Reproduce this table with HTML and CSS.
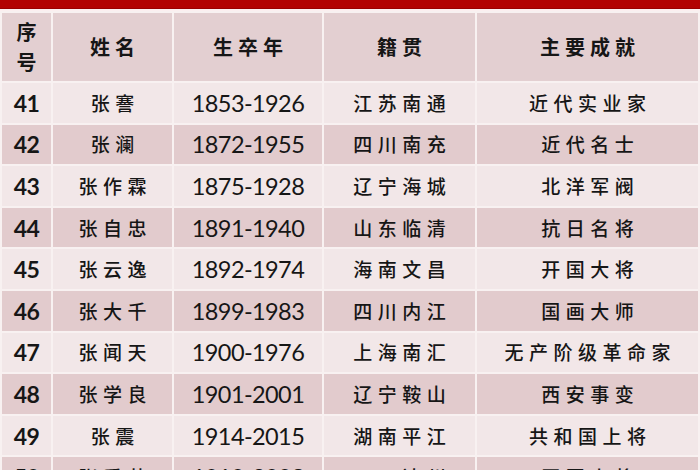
FILE: index.html
```html
<!DOCTYPE html>
<html lang="zh-CN">
<head>
<meta charset="utf-8">
<title>张姓名人</title>
<link rel="stylesheet" href="styles.css">
</head>
<body>
<div class="topbar"></div>
<div class="gapline"></div>
<table class="people">
  <colgroup>
    <col class="c-no"><col class="c-name"><col class="c-life"><col class="c-home"><col class="c-ach">
  </colgroup>
  <thead>
    <tr><th class="no-head">序<br>号</th><th>姓名</th><th>生卒年</th><th>籍贯</th><th>主要成就</th></tr>
  </thead>
  <tbody>
    <tr class="light"><td class="num">41</td><td class="cn">张謇</td><td class="yr">1853-1926</td><td class="cn">江苏南通</td><td class="cn">近代实业家</td></tr>
    <tr class="dark"><td class="num">42</td><td class="cn">张澜</td><td class="yr">1872-1955</td><td class="cn">四川南充</td><td class="cn">近代名士</td></tr>
    <tr class="light"><td class="num">43</td><td class="cn">张作霖</td><td class="yr">1875-1928</td><td class="cn">辽宁海城</td><td class="cn">北洋军阀</td></tr>
    <tr class="dark"><td class="num">44</td><td class="cn">张自忠</td><td class="yr">1891-1940</td><td class="cn">山东临清</td><td class="cn">抗日名将</td></tr>
    <tr class="light"><td class="num">45</td><td class="cn">张云逸</td><td class="yr">1892-1974</td><td class="cn">海南文昌</td><td class="cn">开国大将</td></tr>
    <tr class="dark"><td class="num">46</td><td class="cn">张大千</td><td class="yr">1899-1983</td><td class="cn">四川内江</td><td class="cn">国画大师</td></tr>
    <tr class="light"><td class="num">47</td><td class="cn">张闻天</td><td class="yr">1900-1976</td><td class="cn">上海南汇</td><td class="cn">无产阶级革命家</td></tr>
    <tr class="dark"><td class="num">48</td><td class="cn">张学良</td><td class="yr">1901-2001</td><td class="cn">辽宁鞍山</td><td class="cn">西安事变</td></tr>
    <tr class="light"><td class="num">49</td><td class="cn">张震</td><td class="yr">1914-2015</td><td class="cn">湖南平江</td><td class="cn">共和国上将</td></tr>
    <tr class="dark"><td class="num">50</td><td class="cn">张爱萍</td><td class="yr">1910-2003</td><td class="cn">四川达州</td><td class="cn">开国上将</td></tr>
  </tbody>
</table>
</body>
</html>
```

FILE: styles.css
```css
html, body {
  margin: 0;
  padding: 0;
  background: #f6ecec;
  overflow: hidden;
}
body {
  width: 700px;
  height: 470px;
  color: #161616;
  font-family: "Noto Sans CJK SC", sans-serif;
}
.topbar {
  height: 8px;
  background: #b20202;
  border-bottom: 1px solid #9a0000;
}
.gapline {
  height: 2px;
  background: #fbeff0;
}
.people {
  width: 698px;
  table-layout: fixed;
  border-collapse: collapse;
}
.c-no { width: 51px; }
.c-name { width: 121px; }
.c-life { width: 150px; }
.c-home { width: 153px; }
.c-ach { width: 223px; }
.people th,
.people td {
  border: 2px solid #f8f1f1;
  padding: 0;
  text-align: center;
  vertical-align: middle;
  overflow: hidden;
  white-space: nowrap;
}
.people th {
  height: 68px;
  background: #e3cfd1;
  font-weight: 700;
  font-size: 20px;
  letter-spacing: 5px;
  text-indent: 5px;
  line-height: 30px;
}
.people th.no-head {
  letter-spacing: 0;
  text-indent: 0;
}
.people td {
  height: 39.6px;
  line-height: 24px;
}
.light td { background: #f2e7e8; }
.dark td { background: #e2cbcd; }
.num {
  font-family: "Lato", sans-serif;
  font-weight: 700;
  font-size: 23px;
  letter-spacing: -0.5px;
}
.yr {
  font-family: "Lato", sans-serif;
  font-size: 23.5px;
  letter-spacing: -0.6px;
}
.cn {
  font-size: 19px;
  font-weight: 500;
  letter-spacing: 5.5px;
  text-indent: 5.5px;
}
```
